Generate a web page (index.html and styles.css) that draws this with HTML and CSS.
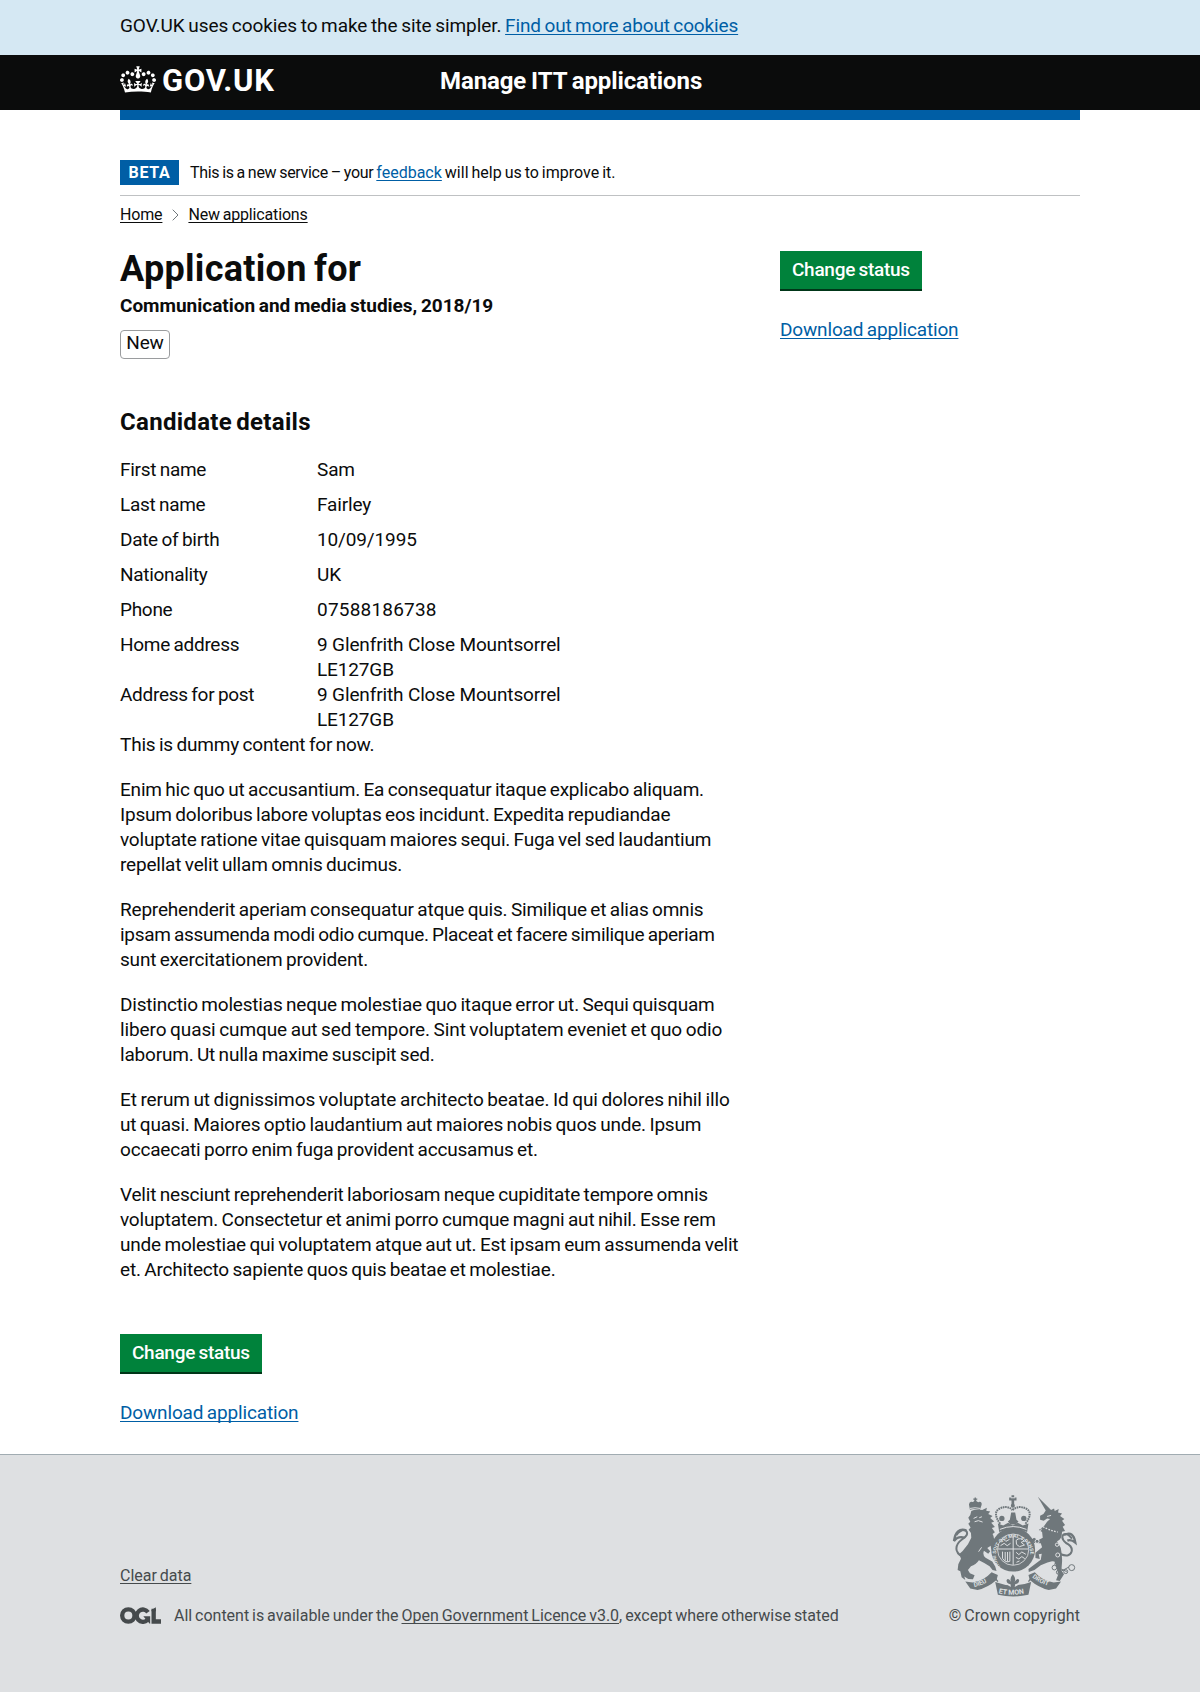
FILE: index.html
```
<!DOCTYPE html>
<html lang="en">
<head>
<meta charset="utf-8">
<title>Manage ITT applications</title>
<link rel="stylesheet" href="styles.css">
</head>
<body>
<div class="cookie-bar"><p class="container">GOV.UK uses cookies to make the site simpler. <a class="link" href="#">Find out more about cookies</a></p></div>

<header class="header">
  <div class="container header-inner">
    <a class="logo" href="#">
      <svg class="crown" viewBox="0 0 132 97" aria-hidden="true"><path fill="currentColor" d="M25 30.2c3.5 1.5 7.7-.2 9.1-3.7 1.5-3.6-.2-7.8-3.9-9.2-3.6-1.4-7.6.3-9.1 3.9-1.4 3.5.3 7.5 3.9 9zM9 39.5c3.6 1.5 7.8-.2 9.2-3.7 1.5-3.6-.2-7.8-3.9-9.1-3.6-1.5-7.6.2-9.1 3.8-1.4 3.5.3 7.5 3.8 9zM4.4 57.2c3.5 1.5 7.7-.2 9.1-3.8 1.5-3.6-.2-7.7-3.9-9.1-3.5-1.5-7.6.3-9.1 3.8-1.4 3.5.3 7.6 3.9 9.1zm38.3-21.4c3.5 1.5 7.7-.2 9.1-3.8 1.5-3.6-.2-7.7-3.9-9.1-3.6-1.5-7.6.3-9.1 3.8-1.3 3.6.4 7.7 3.9 9.1zm64.4-5.6c-3.6 1.5-7.8-.2-9.1-3.7-1.5-3.6.2-7.8 3.8-9.2 3.6-1.4 7.7.3 9.2 3.9 1.3 3.5-.4 7.5-3.9 9zm15.9 9.3c-3.6 1.5-7.7-.2-9.1-3.7-1.5-3.6.2-7.8 3.7-9.1 3.6-1.5 7.7.2 9.2 3.8 1.5 3.5-.3 7.5-3.8 9zm4.7 17.7c-3.6 1.5-7.8-.2-9.2-3.8-1.5-3.6.2-7.7 3.9-9.1 3.6-1.5 7.7.3 9.2 3.8 1.3 3.5-.4 7.6-3.9 9.1zM89.3 35.8c-3.6 1.5-7.8-.2-9.2-3.8-1.4-3.6.2-7.7 3.9-9.1 3.6-1.5 7.7.3 9.2 3.8 1.4 3.6-.3 7.7-3.9 9.1zM69.7 17.7l8.9 4.7V9.3l-8.9 2.8c-.2-.3-.5-.6-.9-.9L72.4 0H59.6l3.5 11.2c-.3.3-.6.5-.9.9l-8.8-2.8v13.1l8.8-4.7c.3.3.6.7.9.9l-5 15.4v.1c-.2.8-.4 1.6-.4 2.4 0 4.1 3.1 7.5 7 8.1h.2c.3 0 .7.1 1 .1.4 0 .7 0 1-.1h.2c4-.6 7.1-4.1 7.1-8.1 0-.8-.1-1.7-.4-2.4V34l-5.1-15.4c.4-.2.7-.6 1-.9zM66 92.8c16.9 0 32.8 1.1 47.1 3.2 4-16.9 8.9-26.7 14-33.5l-9.6-3.4c1 4.9 1.1 7.2 0 10.2-1.5-1.4-3-4.3-4.2-8.7L108.6 76c2.8-2 5-3.2 7.5-3.3-4.4 9.4-10 11.9-13.6 11.2-4.3-.8-6.3-4.6-5.6-7.9 1-4.7 5.7-5.9 8-.5 4.3-8.7-3-11.4-7.6-8.8 7.1-7.2 7.9-13.5 2.1-21.1-8 6.1-8.1 12.3-4.5 20.8-4.7-5.4-12.1-2.5-9.5 6.2 3.4-5.2 7.9-2 7.2 3.1-.6 4.3-6.4 7.8-13.5 7.2-10.3-.9-10.9-8-11.2-13.8 2.5-.5 7.1 1.8 11 7.3L80.2 60c-4.1 4.4-8 5.3-12.3 5.4 1.4-4.4 8-11.6 8-11.6H55.5s6.4 7.2 7.9 11.6c-4.2-.1-8-1-12.3-5.4l1.4 16.4c3.9-5.5 8.5-7.7 10.9-7.3-.3 5.8-.9 12.8-11.1 13.8-7.2.6-12.9-2.9-13.5-7.2-.7-5 3.8-8.3 7.1-3.1 2.7-8.7-4.6-11.6-9.4-6.2 3.7-8.5 3.6-14.7-4.6-20.8-5.8 7.6-5 13.9 2.2 21.1-4.7-2.6-11.9.1-7.7 8.8 2.3-5.5 7.1-4.2 8.1.5.7 3.3-1.3 7.1-5.7 7.9-3.5.7-9-1.8-13.5-11.2 2.5.1 4.7 1.3 7.5 3.3l-4.7-15.4c-1.2 4.4-2.7 7.2-4.3 8.7-1.1-3-.9-5.3 0-10.2l-9.5 3.4c5 6.9 9.9 16.7 14 33.5 14.8-2.1 30.8-3.2 47.7-3.2z"/></svg>
      <span class="logo-text">GOV.UK</span>
    </a>
    <span class="service-name">Manage ITT applications</span>
  </div>
</header>

<main class="container">
  <div class="blue-bar"></div>
  <div class="phase">
    <strong class="tag">BETA</strong>
    <span><span class="phase-intro">This is a new service – your </span><a class="link" href="#">feedback</a> will help us to improve it.</span>
  </div>
  <nav class="breadcrumbs">
    <a href="#">Home</a>
    <svg class="chevron" viewBox="0 0 7 12" aria-hidden="true"><path d="M.7.7 6 6 .7 11.3" fill="none" stroke="#6f777b"/></svg>
    <a href="#">New applications</a>
  </nav>

  <div class="columns">
    <div class="main-column">
      <h1>Application for</h1>
      <p class="course">Communication and media studies, 2018/19</p>
      <span class="status">New</span>

      <h2>Candidate details</h2>
      <dl class="details">
        <dt>First name</dt><dd>Sam</dd>
        <dt>Last name</dt><dd>Fairley</dd>
        <dt>Date of birth</dt><dd>10/09/1995</dd>
        <dt>Nationality</dt><dd>UK</dd>
        <dt>Phone</dt><dd class="number">07588186738</dd>
        <dt>Home address</dt><dd class="address">9 Glenfrith Close Mountsorrel<br>LE127GB</dd>
        <dt>Address for post</dt><dd class="address">9 Glenfrith Close Mountsorrel<br>LE127GB</dd>
      </dl>
      <div class="prose">
        <p>This is dummy content for now.</p>
        <p>Enim hic quo ut accusantium. Ea consequatur itaque explicabo aliquam.<br>Ipsum doloribus labore voluptas eos incidunt. Expedita repudiandae<br>voluptate ratione vitae quisquam maiores sequi. Fuga vel sed laudantium<br>repellat velit ullam omnis ducimus.</p>
        <p>Reprehenderit aperiam consequatur atque quis. Similique et alias omnis<br><span class="tight">ipsam assumenda modi odio cumque. Placeat et facere similique aperiam</span><br>sunt exercitationem provident.</p>
        <p>Distinctio molestias neque molestiae quo itaque error ut. Sequi quisquam<br><span class="loose">libero quasi cumque aut sed tempore. Sint voluptatem eveniet et quo odio</span><br>laborum. Ut nulla maxime suscipit sed.</p>
        <p><span class="loose">Et rerum ut dignissimos voluptate architecto beatae. Id qui dolores nihil illo</span><br>ut quasi. Maiores optio laudantium aut maiores nobis quos unde. Ipsum<br>occaecati porro enim fuga provident accusamus et.</p>
        <p>Velit nesciunt reprehenderit laboriosam neque cupiditate tempore omnis<br>voluptatem. Consectetur et animi porro cumque magni aut nihil. Esse rem<br>unde molestiae qui voluptatem atque aut ut. Est ipsam eum assumenda velit<br>et. Architecto sapiente quos quis beatae et molestiae.</p>
      </div>
      <div class="actions">
        <a class="button" href="#">Change status</a>
        <a class="link download" href="#">Download application</a>
      </div>
    </div>
    <aside class="actions side">
      <a class="button" href="#">Change status</a>
      <a class="link download" href="#">Download application</a>
    </aside>
  </div>
</main>

<footer class="footer">
  <div class="container footer-inner">
    <div class="footer-meta">
      <a href="#">Clear data</a>
      <div class="licence">
        <svg class="ogl" viewBox="0 0 123 50" role="img" aria-label="OGL">
          <g fill="none" stroke="currentColor" stroke-width="13">
            <circle cx="25" cy="25" r="18.5"/>
            <path d="M84 15A18.5 18.5 0 1 0 82 38.500"/>
            <path d="M101 5V43H123"/>
          </g>
          <path fill="currentColor" d="M70 27H90.500V49.500H89.500L83 43 70 27zM94.500 8.500 107.500 0V12H94.500z"/>
        </svg>
        <span>All content is available under the <a href="#">Open Government Licence v3.0</a>, except where otherwise stated</span>
      </div>
    </div>
    <div class="copyright">
      <svg class="arms" viewBox="30 40 385 315" aria-hidden="true">
        <defs>
          <path id="ring-path" d="M181 260A52 52 0 1 1 262 257"/>
          <path id="left-path" d="M103 322Q130 318 160 295"/>
          <path id="mid-path" d="M176 341Q219 351 266 339"/>
          <path id="right-path" d="M277 293Q306 317 340 322"/>
        </defs>
        <g fill="currentColor">
          <!-- lion -->
          <path d="M90 90 87 74Q88 65 95 66 99 68 103 64V60H100V56H104V53H108V56H112V60H109V64Q114 69 119 66 127 67 125 76L120 90Q104 86 90 90z"/>
          <path d="M94 94Q109 87 127 91L141 84 139 93 151 95 145 103 158 109 151 115 163 125 154 129 165 142 156 145 165 158 158 163Q165 174 161 188L170 202 160 213Q151 210 153 198L142 205 151 215 145 222 132 213Q127 227 137 234L157 246 166 261 170 274 158 271 149 260 133 250 117 242Q108 256 93 260L84 271 90 281 104 287 99 299 85 298 73 291 76 301 65 293 61 275 53 271 55 254 63 237 58 223 68 214 84 194 94 174 93 160 86 150 92 143 85 132 91 126 85 114 91 106z"/>
          <!-- unicorn -->
          <path d="M294 51 334 91 343 86 345 94 357 88 355 98 367 101 361 109 374 118 367 123 376 136 369 141 376 154 367 156Q367 179 352 185L363 204Q368 227 367 248L365 273 373 284 360 304 349 302 356 283 350 263 344 246 337 245 323 249 303 257 284 271 267 277 266 268 280 258 294 247 303 240 306 222 297 224 300 238 287 235 287 219 297 211 307 203 303 191 284 190 274 180 283 174 295 182 309 174 307 157 297 151 313 139 322 126 331 118 322 116 312 123 301 120 301 108 311 103 318 92z"/>
          <!-- shield garter -->
          <circle cx="220" cy="210" r="66"/>
          <!-- royal crown -->
          <path d="M178 157 174 131 190 137 205 129 219 137 234 129 249 137 266 131 262 157Q220 140 178 157z"/>
          <path d="M215 78V62H208V53H215V46H223V53H230V62H223V78z"/>
          <path d="M214 98H226L230 120 236 125 228 134H212L204 125 210 120z"/>
          <circle cx="219" cy="78" r="6"/>
          <circle cx="186" cy="116" r="8"/><circle cx="252" cy="116" r="8"/>
          <!-- motto scroll -->
          <path d="M76 306 98 309Q132 304 155 278L174 286 170 301Q142 325 113 331L91 327z"/>
          <path d="M364 306 342 309Q308 304 285 278L266 286 270 301Q298 325 327 331L349 327z"/>
          <path d="M166 307Q221 328 274 307L266 346Q220 356 174 346z"/>
        </g>
        <!-- fleur-de-lis below the shield -->
        <circle cx="219" cy="301" r="22" fill="#dee0e2"/>
        <path fill="currentColor" d="M219 284Q230 297 224 307 234 293 238 302 238 312 226 314L224 325H214L212 314Q200 312 200 302 205 293 214 307 208 297 219 284z"/>
        <g fill="none" stroke="currentColor">
          <path stroke-width="6" d="M82 231Q56 233 50 212 46 194 65 180 89 165 78 153 66 146 49 166M363 224Q391 234 396 215 399 200 379 190 362 176 371 165 382 158 397 177"/>
          <path stroke-width="7" d="M79 152Q48 142 42 184 54 168 74 174M373 166Q401 151 407 189 394 178 383 183"/>
          <path stroke-width="6" stroke-dasharray="5 2" d="M181 132Q157 99 178 87 202 75 218 91M257 132Q281 99 260 87 236 75 218 91"/>
          <path stroke-width="3" d="M351 244 344 255M351 262 381 276M353 281 388 262"/>
          <circle cx="396" cy="264" r="9" stroke-width="3"/><circle cx="344" cy="264" r="7" stroke-width="3"/><circle cx="378" cy="276" r="6" stroke-width="3"/><circle cx="356" cy="278" r="6" stroke-width="3"/>
          <path stroke-width="4" d="M157 284 174 306M283 284 266 306"/>
        </g>
        <g fill="none" stroke="#dee0e2">
          <circle cx="220" cy="210" r="47" stroke-width="2.500"/>
          <path stroke-width="3" d="M220 164V256M174 208H266"/>
          <path stroke-width="3" d="M184 184 191 178 198 185 209 179M182 198 193 191 202 198 212 191M229 182Q242 171 253 184L244 188 254 196 239 201 230 194zM188 216V236Q197 251 210 245V216M196 217V243M203 217V246M229 218 237 225 246 217 258 224M228 233 237 238 246 231 255 237M230 248 239 244"/>
          <path stroke-width="3" d="M90 86Q105 82 121 86M101 116 112 111M118 114 126 111M104 126Q115 119 128 127M180 149Q220 132 260 149M213 54H226M322 110 334 107M116 216 125 203"/>
          <path stroke-width="4" stroke-dasharray="5 4" d="M310 141Q327 151 354 157"/>
          <circle cx="299" cy="149" r="5" stroke-width="3"/><circle cx="292" cy="185" r="6" stroke-width="3"/><circle cx="352" cy="195" r="5" stroke-width="3"/><circle cx="354" cy="226" r="6" stroke-width="3"/>
        </g>
        <g class="motto">
          <text class="motto-ring"><textPath href="#ring-path">HONI SOIT QUI MAL Y PENSE</textPath></text>
          <text><textPath href="#left-path">DIEU</textPath></text>
          <text class="motto-mid"><textPath href="#mid-path">ET MON</textPath></text>
          <text><textPath href="#right-path">DROIT</textPath></text>
        </g>
      </svg>
      <span>© Crown copyright</span>
    </div>
  </div>
</footer>
</body>
</html>
```
FILE: styles.css
```
* { box-sizing: border-box; }
body {
  margin: 0;
  font: 19px/25px Roboto, "Liberation Sans", sans-serif;
  letter-spacing: -0.2px;
  word-spacing: -1px;
  color: #0b0c0c;
  background: #fff;
  white-space: nowrap;
}
p, h1, h2, dl, dd { margin: 0; }
a { color: inherit; text-underline-offset: 2px; text-decoration-thickness: 1px; text-decoration-skip-ink: none; }
.link { color: #005ea5; }
.container { width: 960px; margin: 0 auto; }

.cookie-bar { height: 55px; padding-top: 13px; background: #d5e8f3; letter-spacing: -0.07px; }
.cookie-bar .link { letter-spacing: -0.14px; }

.header { height: 55px; background: #0b0c0c; color: #fff; }
.header-inner { display: flex; height: 55px; }
.logo { display: flex; width: 320px; text-decoration: none; }
.crown { width: 36px; height: 27px; margin-top: 11px; }
.logo-text { margin-left: 6px; font-size: 31px; font-weight: 700; line-height: 52px; letter-spacing: 0.75px; }
.service-name { font-size: 24px; font-weight: 700; line-height: 52px; letter-spacing: -0.1px; word-spacing: -1px; }

.blue-bar { height: 10px; background: #005ea5; }
.phase {
  display: flex;
  align-items: center;
  height: 76px;
  padding: 30px 0 0;
  border-bottom: 1px solid #bfc1c3;
  font-size: 16px;
  letter-spacing: 0;
}
.phase-intro { letter-spacing: -0.3px; word-spacing: -0.8px; }
.tag { width: 59px; height: 25px; margin-right: 11px; background: #005ea5; color: #fff; text-align: center; line-height: 25px; letter-spacing: 0.7px; }
.breadcrumbs { display: flex; align-items: center; height: 37px; font-size: 16px; letter-spacing: -0.16px; }
.chevron { width: 7px; height: 12px; margin: 0 9px 0 10px; }

.columns { display: flex; padding-top: 16px; }
.main-column { width: 660px; }
h1 { font-size: 36px; line-height: 40px; letter-spacing: 0.3px; word-spacing: -2px; }
.course { margin-top: 4px; font-weight: 700; letter-spacing: -0.02px; word-spacing: -1px; }
.status { display: block; width: 50px; height: 29px; margin-top: 12px; border: 1px solid #9a9c9e; border-radius: 4px; text-align: center; line-height: 23px; }
h2 { margin-top: 48px; font-size: 24px; line-height: 30px; letter-spacing: 0.3px; word-spacing: -2px; }
.details { display: grid; grid-template-columns: 197px 1fr; margin-top: 20px; letter-spacing: -0.14px; word-spacing: 0; }
.details dt { letter-spacing: -0.3px; word-spacing: -0.8px; }
.details dd { padding-bottom: 10px; }
.details .number { letter-spacing: 0.2px; }
.details .address { padding-bottom: 0; }
.prose { display: grid; gap: 20px; }
.tight { letter-spacing: -0.31px; }
.loose { letter-spacing: -0.1px; }

.actions { display: flex; flex-direction: column; align-items: flex-start; gap: 26px; margin-top: 52px; }
.side { margin-top: 2px; }
.button { height: 40px; padding: 6px 12px 0; border-bottom: 2px solid #003618; background: #00823b; color: #fff; text-decoration: none; font-weight: 500; width: 142px; letter-spacing: -0.28px; }
.download { letter-spacing: -0.16px; }

.footer { height: 238px; margin-top: 29px; border-top: 1px solid #a1acb2; background: #dee0e2; color: #454a4c; font-size: 16px; line-height: 20px; letter-spacing: -0.02px; }
.footer-inner { display: flex; justify-content: space-between; align-items: flex-end; height: 171px; }
.footer-meta { display: grid; gap: 20px; }
.licence { display: flex; align-items: center; }
.ogl { width: 41px; height: 17px; margin: 0 13px 1px 0; }
.copyright { display: flex; flex-direction: column; align-items: flex-end; letter-spacing: 0.05px; }
.arms { width: 128px; height: 105px; margin: 0 2px 8px 0; color: #6f777b; }
.motto { fill: #dee0e2; font-size: 19px; font-weight: 700; letter-spacing: 0; word-spacing: 0; }
.motto-mid { font-size: 21px; }
.motto-ring { font-size: 15px; letter-spacing: 0; }
```
